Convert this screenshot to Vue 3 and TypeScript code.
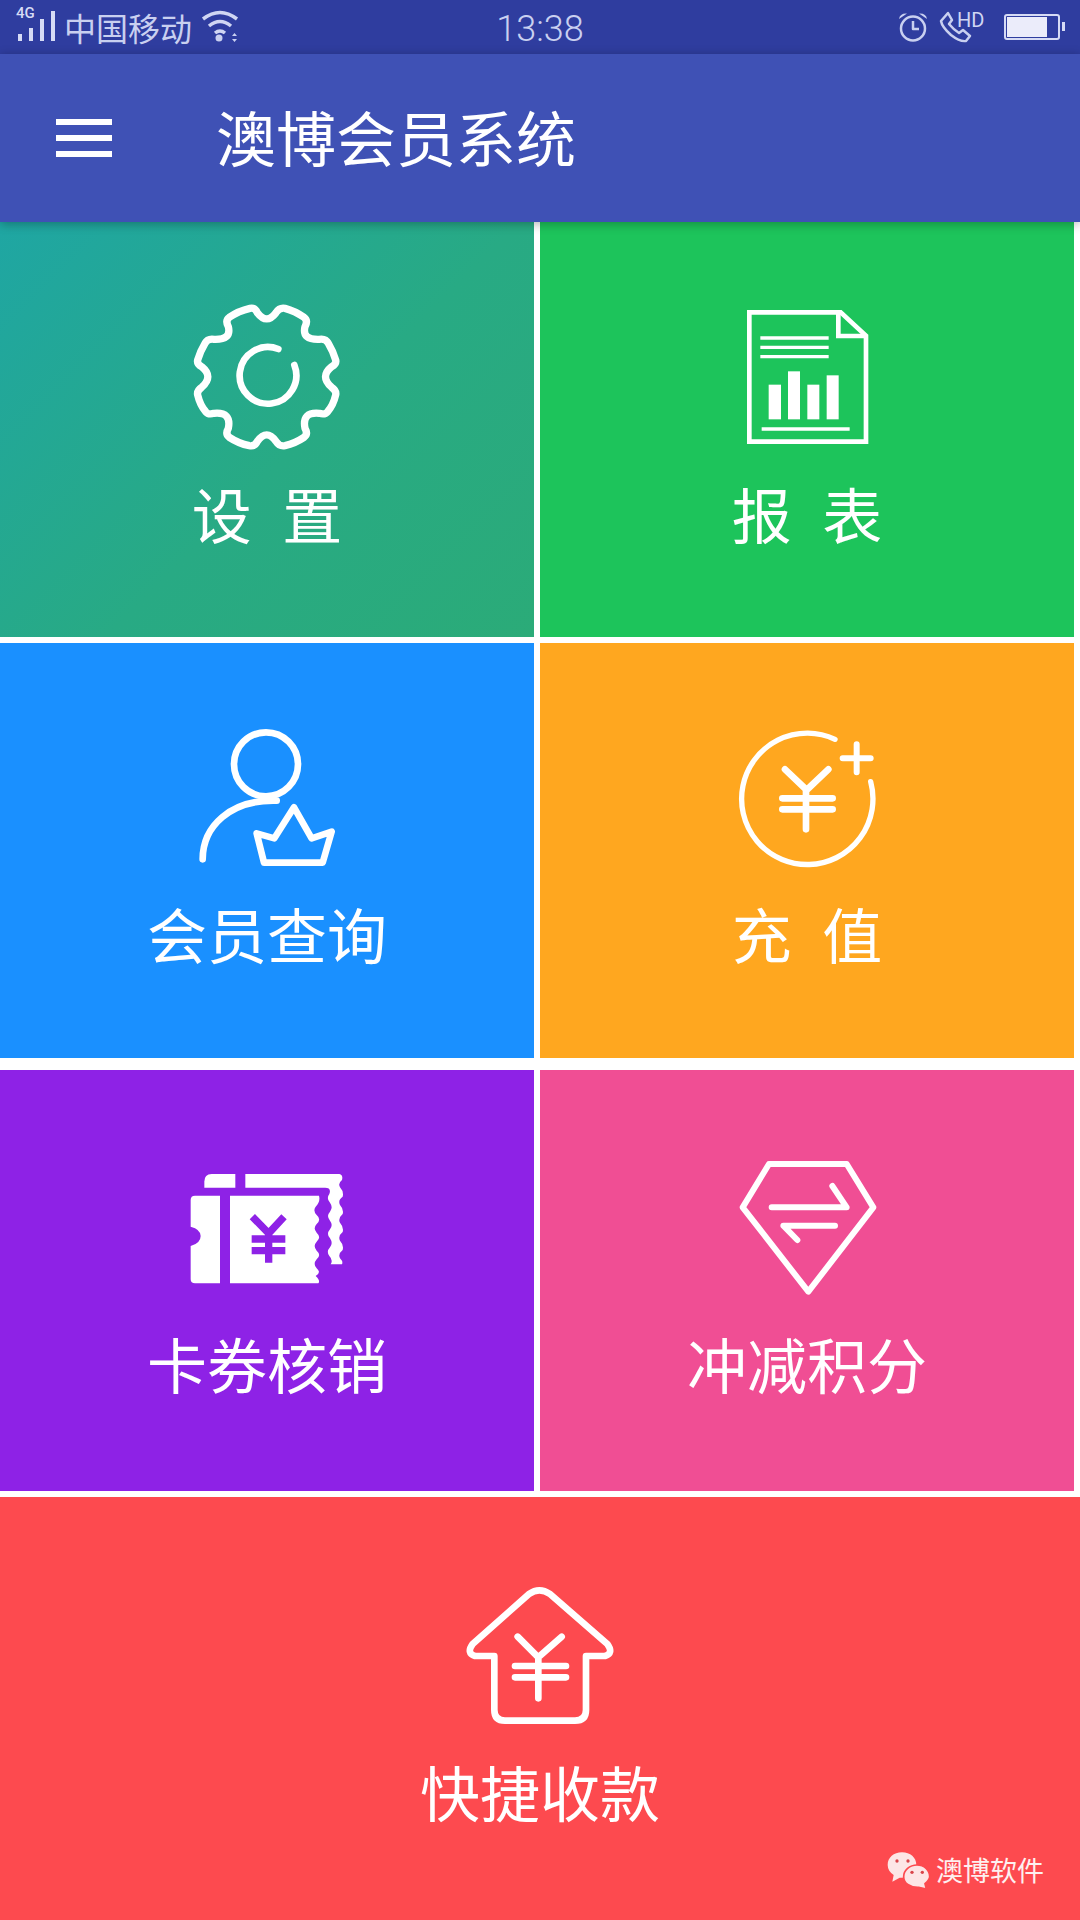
<script setup lang="ts">
const title = '澳博会员系统'
</script>

<template>
  <div class="screen">
    <div class="status-bar">
      <div class="status-left">
        <svg class="signal" width="42" height="36" viewBox="0 0 42 36">
          <text x="0" y="12" class="net">4G</text>
          <rect x="2" y="28" width="4" height="7" />
          <rect x="13" y="22" width="4" height="13" />
          <rect x="24" y="13" width="4" height="22" />
          <rect x="35" y="5" width="4" height="30" />
        </svg>
        <span class="carrier">中国移动</span>
        <svg class="wifi" width="38" height="34" viewBox="0 0 38 34">
          <path d="M2 10 Q19 -3 36 10" />
          <path d="M8 17 Q19 8 30 17" />
          <path d="M14 24 Q19 20 24 24" />
          <circle cx="18" cy="29" r="3.500" class="dot" />
          <path d="M31 27 l2.500 -3 l2.500 3 z M31 30 l2.500 3 l2.500 -3 z" class="dot" />
        </svg>
      </div>
      <span class="time">13:38</span>
      <div class="status-right">
        <svg width="30" height="30" viewBox="0 0 30 30">
          <circle cx="15" cy="16.500" r="12" class="thin" />
          <path d="M15 9 V17 H21" class="thin" />
          <path d="M1 7 Q2 1 9 1.500 Z M29 7 Q28 1 21 1.500 Z" class="dot" />
        </svg>
        <svg class="call" width="44" height="30" viewBox="0 0 44 30">
          <path d="M8 1 L1 9 Q2 15 11 23 Q20 30 26 29 L30 24 L23 18 L19 21 Q14 18 9 12 L12 8 Z" class="thin" />
          <text x="17" y="15" class="hd">HD</text>
        </svg>
        <div class="battery"><div class="battery-fill"></div></div>
      </div>
    </div>

    <header class="app-bar">
      <div class="menu"><span></span><span></span><span></span></div>
      <h1 class="title">{{ title }}</h1>
    </header>

    <main class="grid">
      <div class="tile settings">
        <svg class="icon" viewBox="21 6 600 540">
          <path d="M270 85 Q285 82 292 98 Q320 135 348 98 Q358 82 375 85 Q405 93 432 112 Q445 122 435 140 Q425 180 478 178 Q497 175 505 190 Q520 215 527 240 Q530 252 515 260 Q478 290 515 322 Q530 332 527 345 Q520 375 503 395 Q495 405 478 400 Q425 395 435 445 Q445 462 432 472 Q405 490 375 497 Q358 500 348 484 Q320 445 292 484 Q285 500 268 497 Q235 490 208 472 Q195 462 205 445 Q215 395 162 400 Q145 405 137 395 Q120 375 113 345 Q110 332 125 322 Q162 290 125 260 Q110 252 113 240 Q120 215 135 190 Q143 175 162 178 Q215 180 205 140 Q195 122 208 112 Q235 93 270 85 Z" class="s22" />
          <path d="M403 255 A85 85 0 1 1 355 207" class="s20" />
        </svg>
        <span class="label">设 置</span>
      </div>

      <div class="tile report">
        <svg class="icon" viewBox="-9 -24 600 540">
          <path d="M118 67 H392 L468 137 V455 H118 Z" class="sharp s14" />
          <path d="M385 67 V138 H468" class="sharp s14" />
          <path d="M151 144 H356 M151 172 H356 M151 200 H356 M155 417 H419" class="sharp s10" />
          <rect x="176" y="284" width="37" height="104" class="fill" />
          <rect x="234" y="244" width="36" height="144" class="fill" />
          <rect x="292" y="284" width="36" height="104" class="fill" />
          <rect x="350" y="256" width="36" height="132" class="fill" />
        </svg>
        <span class="label">报 表</span>
      </div>

      <div class="tile member">
        <svg class="icon" viewBox="-39 -21 600 540">
          <circle cx="258" cy="163" r="96" class="s20" />
          <path d="M68 448 C68 350 150 268 290 272" class="s20" />
          <path d="M230 370 L283 385 L342 292 L395 385 L455 365 L428 458 H252 Z" class="s20" />
        </svg>
        <span class="label">会员查询</span>
      </div>

      <div class="tile recharge">
        <svg class="icon" viewBox="-39 -21 600 540">
          <path d="M345 88 A197 197 0 1 0 452 215" class="s16" />
          <path d="M368 145 H452 M410 103 V187" class="s18" />
          <path d="M195 178 L260 240 L325 178 M258 240 V358 M187 265 H338 M187 298 H338" class="s20" />
        </svg>
        <span class="label">充 值</span>
      </div>

      <div class="tile coupon row-three">
        <svg class="icon" viewBox="-9 -60 600 540">
          <path d="M103 113 V95 Q103 72 125 72 H196 V113 Z" class="fill" />
          <path d="M226 72 H508 Q520 75 516 90 Q503 100 510 112 Q522 125 518 140 Q503 150 510 165 Q522 178 518 192 Q503 205 510 218 Q522 232 518 246 Q503 258 510 272 Q522 285 518 300 Q503 312 510 325 Q520 335 516 343 H482 Q490 330 478 318 Q468 305 480 292 Q490 280 480 265 Q468 252 480 238 Q490 225 480 212 Q468 198 480 185 Q490 172 480 158 Q468 145 478 132 Q485 113 465 113 H226 Z" class="fill" />
          <path d="M150 137 V400 H75 Q62 400 62 388 V288 Q92 280 92 258 Q92 238 62 230 V150 Q62 137 75 137 Z" class="fill" />
          <path d="M180 137 H447 Q452 155 437 170 Q428 182 440 195 Q455 208 440 222 Q428 235 440 248 Q455 262 440 275 Q428 288 440 302 Q455 315 440 328 Q428 342 440 355 Q455 368 437 378 Q452 392 445 400 H180 Z" class="fill" />
          <path d="M247 200 L296 250 L342 200 M296 250 V338 M245 267 H346 M245 302 H346" class="purple" />
        </svg>
        <span class="label">卡券核销</span>
      </div>

      <div class="tile points row-three">
        <svg class="icon" viewBox="-39 -60 600 540">
          <path d="M147 42 H380 L460 172 L265 425 L68 172 Z" class="s18" />
          <path d="M155 172 H380 L337 108 M345 227 H190 L232 270" class="s18" />
        </svg>
        <span class="label">冲减积分</span>
      </div>

      <div class="tile cashier">
        <svg class="icon" viewBox="-30 -39 600 540">
          <path d="M237 72 Q268 50 300 72 L472 222 Q492 250 465 258 H408 V420 Q408 452 375 452 H165 Q133 452 133 420 V258 H75 Q48 250 68 222 Z" class="s20" />
          <path d="M203 200 L265 262 L335 200 M265 262 V385 M195 288 H348 M195 322 H348" class="s20" />
        </svg>
        <span class="label">快捷收款</span>
        <div class="watermark">
          <svg width="44" height="39" viewBox="80 88 132 117">
            <path d="M125 92 C100 92 82 108 82 130 C82 143 89 153 100 160 L96 180 L118 168 C150 170 168 150 168 130 C168 108 150 92 125 92 Z" class="wx" />
            <path d="M170 130 C148 130 130 146 130 165 C130 184 148 198 175 197 L198 202 L194 186 C203 178 208 172 208 165 C208 146 192 130 170 130 Z" class="wx wx-front" />
            <circle cx="110" cy="118" r="5" class="wx-eye" />
            <circle cx="143" cy="118" r="5" class="wx-eye" />
            <circle cx="155" cy="152" r="5" class="wx-eye" />
            <circle cx="186" cy="152" r="5" class="wx-eye" />
          </svg>
          <span>澳博软件</span>
        </div>
      </div>
    </main>
  </div>
</template>

<style scoped>
.screen {
  width: 1080px;
  height: 1920px;
  overflow: hidden;
  background: #fff;
  font-family: "Noto Sans CJK SC", "Noto Sans", sans-serif;
}

.status-bar {
  height: 54px;
  display: grid;
  grid-template-columns: 1fr auto 1fr;
  align-items: center;
  padding: 0 16px;
  box-sizing: border-box;
  background: #2f3d9f;
  color: #c9d0f0;
}

.status-left {
  display: flex;
  align-items: center;
}

.signal {
  fill: #d6dbf5;
  margin-top: -7px;
  overflow: visible;
}

.net {
  font: 500 15px "Roboto", sans-serif;
}

.carrier {
  font-size: 32px;
  line-height: 54px;
  margin-left: 6px;
  margin-top: -1px;
}

.wifi {
  margin-left: 9px;
  margin-top: -3px;
}

.wifi path {
  fill: none;
  stroke: #d0d6f3;
  stroke-width: 3.500;
}

.wifi .dot,
.dot {
  fill: #c9d0f0;
  stroke: none;
}

.time {
  font-family: "Roboto", sans-serif;
  font-weight: 300;
  font-size: 36px;
  margin-top: 4px;
}

.status-right {
  display: flex;
  justify-content: flex-end;
  align-items: center;
}

.thin {
  fill: none;
  stroke: #c9d0f0;
  stroke-width: 2.500;
  stroke-linejoin: round;
}

.call {
  margin-left: 12px;
  overflow: visible;
}

.hd {
  font: 400 20px "Roboto", sans-serif;
  fill: #d0d6f3;
}

.battery {
  position: relative;
  width: 56px;
  height: 26px;
  margin-left: 20px;
  margin-right: 4px;
  border: 2.500px solid #d6dbf5;
  border-radius: 3px;
  box-sizing: border-box;
  padding: 1px;
}

.battery::after {
  content: "";
  position: absolute;
  right: -7px;
  top: 6px;
  width: 3px;
  height: 9px;
  background: #d6dbf5;
}

.battery-fill {
  width: 40px;
  height: 100%;
  background: #ebecfa;
}

.app-bar {
  position: relative;
  z-index: 2;
  height: 168px;
  display: flex;
  align-items: center;
  padding-left: 56px;
  background: #3f51b5;
  box-shadow: 0 2px 10px rgba(0, 0, 0, 0.3);
}

.menu {
  width: 56px;
  display: flex;
  flex-direction: column;
  gap: 9.500px;
}

.menu span {
  height: 6.500px;
  background: #fff;
}

.title {
  margin: -5px 0 0 104px;
  color: #fff;
  font-size: 60px;
  font-weight: 400;
  line-height: 1;
}

.grid {
  display: grid;
  grid-template-columns: 534px 534px;
  grid-template-rows: 415px 415px 427px 423px;
  gap: 6px;
}

.tile {
  position: relative;
  display: flex;
  flex-direction: column;
  align-items: center;
  padding-top: 60px;
  box-sizing: border-box;
  color: #fff;
}

.row-three {
  margin-top: 6px;
}

.icon {
  width: 200px;
  height: 180px;
  flex: none;
}

.icon path,
.icon circle {
  fill: none;
  stroke: #fff;
  stroke-linecap: round;
  stroke-linejoin: round;
}

.icon .sharp {
  stroke-linecap: butt;
  stroke-linejoin: miter;
}

.icon .s10 { stroke-width: 10; }
.icon .s14 { stroke-width: 14; }
.icon .s16 { stroke-width: 16; }
.icon .s18 { stroke-width: 18; }
.icon .s20 { stroke-width: 20; }
.icon .s22 { stroke-width: 22; }

.icon .fill,
.icon path.fill {
  fill: #fff;
  stroke: none;
}

.icon .purple {
  stroke: #8e22e6;
  stroke-width: 22;
  stroke-linecap: butt;
  stroke-linejoin: miter;
}

.label {
  margin-top: 15px;
  font-size: 60px;
  line-height: 72px;
  word-spacing: 17px;
  white-space: pre;
}

.member .label,
.recharge .label {
  margin-top: 14px;
}

.row-three .label {
  margin-top: 17px;
}

.cashier .label {
  margin-top: 18px;
}

.settings { background: linear-gradient(135deg, #1fa6a3 0%, #28aa84 55%, #2bab78 100%); }
.report { background: #1dc45b; }
.member { background: #1a90ff; }
.recharge { background: #ffa71f; }
.coupon { background: #8e22e6; }
.points { background: #f04e94; }

.cashier {
  grid-column: 1 / -1;
  width: 1080px;
  background: #fd4a4f;
}

.watermark {
  position: absolute;
  right: 36px;
  bottom: 30px;
  display: flex;
  align-items: center;
  gap: 5px;
  color: #fdf0f0;
  font-size: 27px;
  line-height: 40px;
}

.wx {
  fill: #fde6e6;
}

.wx-front {
  stroke: #fd4a4f;
  stroke-width: 5;
}

.wx-eye {
  fill: #d9454a;
}
</style>

<style>
html, body {
  margin: 0;
  background: #fff;
}
</style>
